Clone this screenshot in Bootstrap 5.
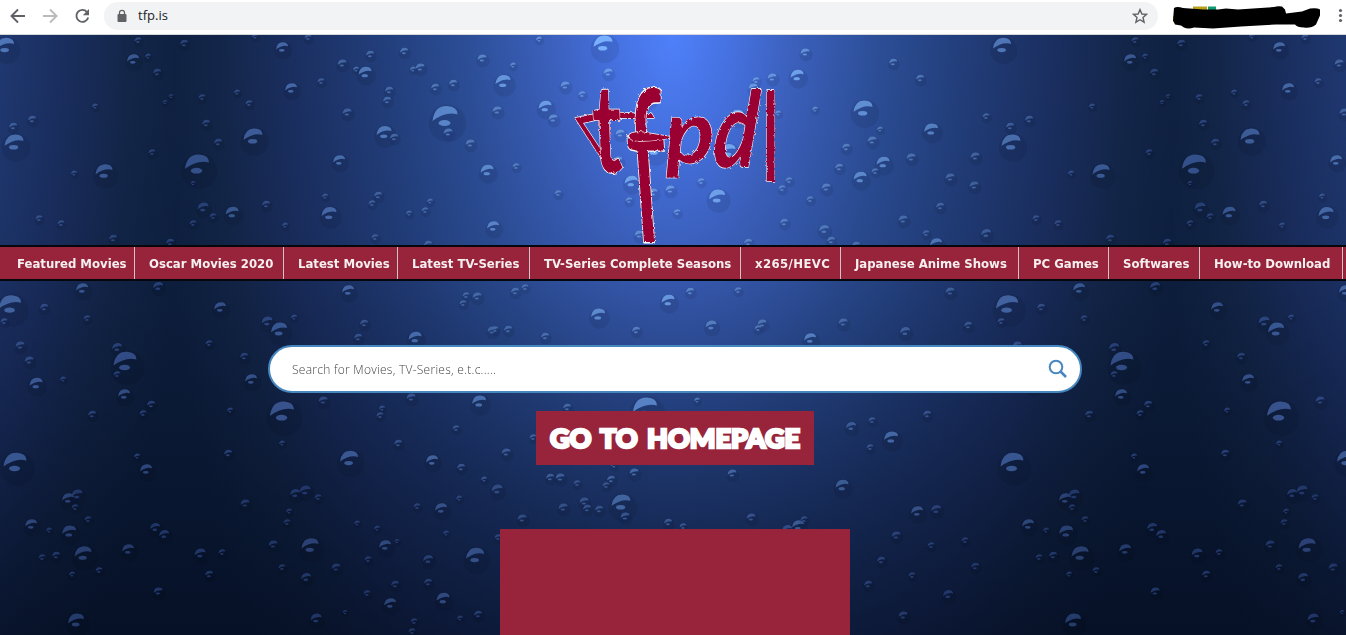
<!DOCTYPE html>
<html lang="en">
<head>
<meta charset="utf-8">
<title>tfp.is</title>
<link href="https://cdn.jsdelivr.net/npm/bootstrap@5.3.0/dist/css/bootstrap.min.css" rel="stylesheet">
<style>
html,body{height:100%;overflow:hidden}
body{font-family:"Open Sans","Noto Sans",sans-serif}
.toolbar{height:35px;border-bottom:1px solid #d5d7da;padding:0 0 3px}
.toolbar svg{flex:none;display:block}
.omnibox{height:28px;width:1054px;margin-left:13px;background:#f1f3f4;font-size:13px;color:#202124;padding:0 10px 0 12px}
.omnibox span{margin-left:2px;padding-top:1px}
.page-bg{background:
 linear-gradient(rgba(0,4,16,0),rgba(0,6,20,.06) 35%,rgba(0,6,20,.32) 70%,rgba(0,6,20,.58)),
 radial-gradient(ellipse 515px 1050px at 50% 0,#4f80fa 0,#4672e2 11%,#3c61be 23%,#2c4e97 40%,#223e7b 56%,#1a2e5f 75%,#132649 88%,#0e2040 100%) 174px 0/997px 600px repeat-x #0e2040;}
.bubbles{inset:0;width:1346px;height:600px}
.masthead{height:210px}
.masthead svg{margin-top:35px;overflow:visible}
.menu-strip{height:36px;background:#97243b;border-top:2px solid #05070c;border-bottom:2px solid #05070c;font:bold 13px/34px "DejaVu Sans Condensed","DejaVu Sans",sans-serif;font-stretch:condensed}
.menu-strip a{color:#f6eff0;text-decoration:none;white-space:nowrap;border-right:1px solid #d2c3c6;padding-left:14px;flex:none;height:32px}
.landing{padding-left:4px}
.search-pill{width:814px;height:48px;margin-top:64px;border:2px solid #4787bf;padding:0 12px 0 22px}
.search-pill input{font:300 12px "Open Sans",sans-serif;letter-spacing:.26px;color:#444;outline:0}
.search-pill input::placeholder{color:#444;opacity:1}
.home-btn{width:278px;height:54px;margin-top:18px;background:#97243b;color:#fff;border:0;border-radius:0;padding:0;font:900 27px/54px Lato,sans-serif;word-spacing:3px;-webkit-text-stroke:2.600px #fff;white-space:nowrap}
.home-btn:hover{background:#97243b;color:#fff}
.ad-block{width:350px;height:106px;margin-top:64px;background:#97243b}
</style>
</head>
<body class="d-flex flex-column bg-white">
<header class="toolbar d-flex align-items-center bg-white">
 <svg width="91" height="32" fill="none" stroke="#5f6368" stroke-width="1.9"><path d="M25 16H12M18 9.500 11.500 16l6.500 6.500"/><path stroke="#b9bbbd" d="M43 16h13M50 9.500l6.500 6.500-6.500 6.500"/><path d="M87 12a6 6 0 1 0 1.200 5.500"/><path fill="#5f6368" stroke="none" d="M89 9v6.200h-6.200z"/></svg>
 <div class="omnibox rounded-pill d-flex align-items-center">
  <svg width="12" height="14" class="me-2"><rect x="1.500" y="5" width="9" height="8" rx="1" fill="#5f6368"/><path d="M3.500 6V3.800a2.500 2.500 0 0 1 5 0V6" fill="none" stroke="#5f6368" stroke-width="1.300"/></svg>
  <span>tfp.is</span>
  <svg width="16" height="16" class="ms-auto" viewBox="0 0 16 16"><path d="M8 1.600 9.900 6l4.700.4L11 9.500l1.100 4.700L8 11.700l-4.100 2.500L5 9.500 1.400 6.400 6.100 6z" fill="none" stroke="#5f6368" stroke-width="1.400"/></svg>
 </div>
 <svg width="188" height="34" viewBox="1158 0 188 34"><path d="M1174.500 17v6" stroke="#f4b400" stroke-width="3"/><path d="M1193 9.500h14" stroke="#b8a01b" stroke-width="4"/><path d="M1208 10h8" stroke="#0f9d70" stroke-width="5"/><path d="M1174 9q3-2 9 0l20 1.500 15 0 8-1 12 1 15-1 21-1.500q3-1 8-.5l3 3 1 4 16-2 8-3q7-1 10 1l0 6-4 9q-5 4-12 3-7 0-9-3l-19 0-35 2-28 2-19-1q-6 2-10 0l-3-2-6-1-2-4z"/><g fill="#5f6368"><circle cx="1340.500" cy="11.500" r="1.600"/><circle cx="1340.500" cy="16.500" r="1.600"/><circle cx="1340.500" cy="21.500" r="1.600"/></g></svg>
</header>
<main class="page-bg flex-grow-1 position-relative overflow-hidden">
 <svg class="bubbles position-absolute" viewBox="0 35 1346 600" aria-hidden="true">
  <defs><filter id="soft"><feGaussianBlur stdDeviation=".45"/></filter></defs>
  <g id="drops" filter="url(#soft)"></g>
 </svg>
 <div class="position-relative">
  <div class="masthead w-100 d-flex justify-content-center">
   <svg width="230" height="180" viewBox="558 70 230 180" role="img" aria-label="tfpdl">
    <defs><filter id="rough" x="-10%" y="-10%" width="120%" height="120%"><feTurbulence type="fractalNoise" baseFrequency=".3" numOctaves="2" seed="4"/><feDisplacementMap in="SourceGraphic" scale="3"/></filter></defs>
    <g filter="url(#rough)" fill="#9b0533" stroke="#fff" stroke-width="1.300" stroke-linejoin="round" font-family="Lato" font-weight="400" font-size="100" style="paint-order:stroke">
     <path d="M575 118 605 112 652 114 654 118 605 118 583 123 609 162 616 174 610 172Z"/>
     <text transform="translate(594 172) skewX(2) scale(.78 1.230)" font-weight="700">t</text>
     <text transform="translate(632 242) skewX(4) scale(1.150 2.120)">f</text>
     <path d="M629 136q0-4 12-4l31 5q-10 4-32 4-11 0-11-5z"/>
     <text transform="translate(666 163) skewX(2) scale(.92 .88)" font-style="italic" font-weight="700">p</text>
     <text transform="translate(712 167) skewX(-4) scale(.82 1.050)" font-style="italic" font-weight="700">d</text>
     <text transform="translate(763 181) scale(.62 1.220)" font-weight="700">l</text>
    </g>
   </svg>
  </div>
  <nav class="menu-strip w-100 d-flex overflow-hidden">
   <a href="#" style="width:135px;padding-left:17px">Featured Movies</a><a href="#" style="width:149px">Oscar Movies 2020</a><a href="#" style="width:114px">Latest Movies</a><a href="#" style="width:132px">Latest TV-Series</a><a href="#" style="width:211px">TV-Series Complete Seasons</a><a href="#" style="width:100px;letter-spacing:.4px">x265/HEVC</a><a href="#" style="width:178px">Japanese Anime Shows</a><a href="#" style="width:90px">PC Games</a><a href="#" style="width:91px">Softwares</a><a href="#" style="width:143px">How-to Download</a>
  </nav>
  <div class="landing d-flex flex-column align-items-center">
   <form class="search-pill rounded-pill bg-white d-flex align-items-center">
    <input class="border-0 bg-transparent flex-grow-1 p-0" placeholder="Search for Movies, TV-Series, e.t.c.....">
    <svg width="20" height="20" fill="none" stroke="#4787bf"><circle cx="8" cy="8" r="6.300" stroke-width="2"/><path d="m12.500 12.500 5.500 5.500" stroke-width="2.600"/></svg>
   </form>
   <button class="home-btn btn">GO TO HOMEPAGE</button>
   <div class="ad-block"></div>
  </div>
 </div>
</main>
<script>
// x, y, width of every droplet in one 997px wide tile
const drops = `5,45,18 138,40,7 133,59,12 148,56,6 157,72,8 184,43,8 282,47,12 308,37,7 255,36,6 342,63,9 370,54,8 404,51,8 413,69,6 420,67,9 356,69,6 365,72,13 291,88,12 321,81,7 389,90,8 387,100,8 435,87,8 453,83,8 482,58,9 513,65,6 503,81,15 539,39,6 545,106,13 553,118,9 497,110,9 445,116,25 448,132,9 384,132,15 394,137,8 470,143,9 347,112,9 339,160,12 487,170,13 516,166,7 253,136,19 197,164,24 104,171,17 74,173,6 14,142,19 13,126,8 32,119,8 95,106,6 171,96,5 165,102,5 202,97,7 237,92,6 249,103,7 206,123,8 218,142,8 152,152,7 193,183,5 203,207,11 232,212,13 213,216,7 193,223,7 266,204,8 325,196,6 329,213,15 378,195,8 372,203,7 409,213,6 430,201,6 425,210,7 375,237,7 285,225,6 39,218,7 61,223,7 113,238,8 170,242,8 493,226,12 428,244,8 558,193,7
805,52,9 797,75,13 815,109,6 893,62,8 920,78,8 863,108,19 880,129,6 931,129,14 986,116,7 872,140,9 846,147,8 883,162,13 911,157,9 839,167,8 860,177,13 875,171,7 789,180,7 826,187,9 810,199,7 950,177,9 974,185,9 975,156,9 940,206,8 903,219,9 824,229,10 831,240,8 926,233,7 986,233,10 936,243,12 856,245,8
603,43,19 608,72,9 565,85,9 582,94,7 647,97,13 756,80,7 753,87,9 772,77,9 737,115,13 778,113,6 620,133,9 654,148,17 728,150,15 618,160,9 631,181,13 653,192,9 670,189,9 629,200,7 701,181,7 717,196,16 677,212,7 639,234,9 782,188,7 784,222,8 748,242,8
10,304,22 82,288,12 158,286,10 44,307,8 4,321,7 87,318,7 220,307,12 267,321,11 279,329,16 294,317,6 348,290,12 364,323,8 358,337,8 415,337,13 466,295,7 477,296,9 463,303,7 492,330,9 20,345,9 29,360,9 36,383,13 63,379,6 117,347,10 125,361,23 117,374,7 124,394,12 92,414,8 151,404,8 143,413,7 209,343,7 244,356,8 251,379,12 230,410,6 282,411,24 323,400,9 411,397,9 479,401,14 382,408,6 380,415,7 456,428,7 398,443,8 15,462,23 137,456,6 146,469,12 228,453,8 282,443,6 349,458,18 432,460,12 461,467,8 484,479,6 497,489,11 68,498,12 77,494,11 75,507,7 31,524,12 49,530,6 69,531,14 88,519,7 155,527,10 164,534,10 295,493,10 305,490,11 318,497,7 245,503,9 289,511,6 287,522,7 417,506,7 441,508,12 459,498,6 357,523,6 377,528,6 446,533,6 83,553,17 56,555,8 42,557,7 128,549,12 200,553,11 222,552,7 273,544,9 310,545,17 385,545,12 397,541,5 428,559,10 475,555,18 368,559,7 336,567,9 282,567,7 306,577,10 209,574,8 72,574,6 99,570,7 158,591,9 395,584,8 428,582,8 367,593,7 390,603,12 443,598,13 478,614,8 460,618,6 316,618,11 76,620,16 414,621,7 412,631,7 345,612,5
567,407,8 645,407,24 697,400,6 533,437,7 506,452,9 851,426,10 634,472,9 614,465,6 732,473,9 560,477,9 550,477,8 577,483,7 611,479,8 606,485,7 842,485,13 621,502,19 584,501,9 587,508,8 599,509,8 563,507,9 625,516,9 522,518,9 751,517,9 668,522,8 683,526,7 798,525,12 804,519,7 787,529,10 498,537,7
598,314,14 668,300,13 762,323,9 711,325,11 758,328,7 810,338,12 515,291,8 525,287,7 495,329,7 508,329,8 690,291,8 545,336,8 636,330,8 738,290,7 843,322,9 905,331,10 950,291,9 968,325,8 891,437,14 872,420,7 927,414,8 870,447,7 917,511,12 936,509,10 931,545,7 868,584,8 948,594,10 965,540,7 881,560,8 903,615,9 912,575,7 975,566,8 896,535,9`.split(/\s+/).map(s => s.split(',').map(Number));
const mix = (a, b, t) => Math.round(a + (b - a) * t);
let out = '';
for (const [x, y, w] of drops) {
  const d = Math.min(Math.abs(x - 673), Math.abs(x + 997 - 673)) / 500;
  let t = Math.max(0, 1 - d) * (1 - (y - 35) / 900) + (w > 11 ? .16 : 0);
  t = Math.min(1, Math.max(0, t - (y - 35) / 3500));
  const low = y > 480 ? .75 : .92;
  const c = `rgb(${mix(42, 125, t)},${mix(66, 182, t)},${mix(122, 255, t)})`;
  for (const ox of [0, 997]) {
    if (x + ox > 1360) continue;
    out += `<g transform="translate(${x + ox} ${y}) scale(${w})"><circle cx=".1" cy=".3" r=".75" fill="#000820" opacity=".08"/><path d="M-.5 .2Q-.42-.42 .08-.4Q.5-.38 .5-.06Q.05-.2-.5 .2Z" fill="${c}" opacity="${low}"/><ellipse cx="-.02" cy=".28" rx=".24" ry=".12" fill="${c}" opacity="${low}"/></g>`;
  }
}
document.getElementById('drops').innerHTML = out;
</script>
<script src="https://cdn.jsdelivr.net/npm/bootstrap@5.3.0/dist/js/bootstrap.bundle.min.js"></script>
</body>
</html>
